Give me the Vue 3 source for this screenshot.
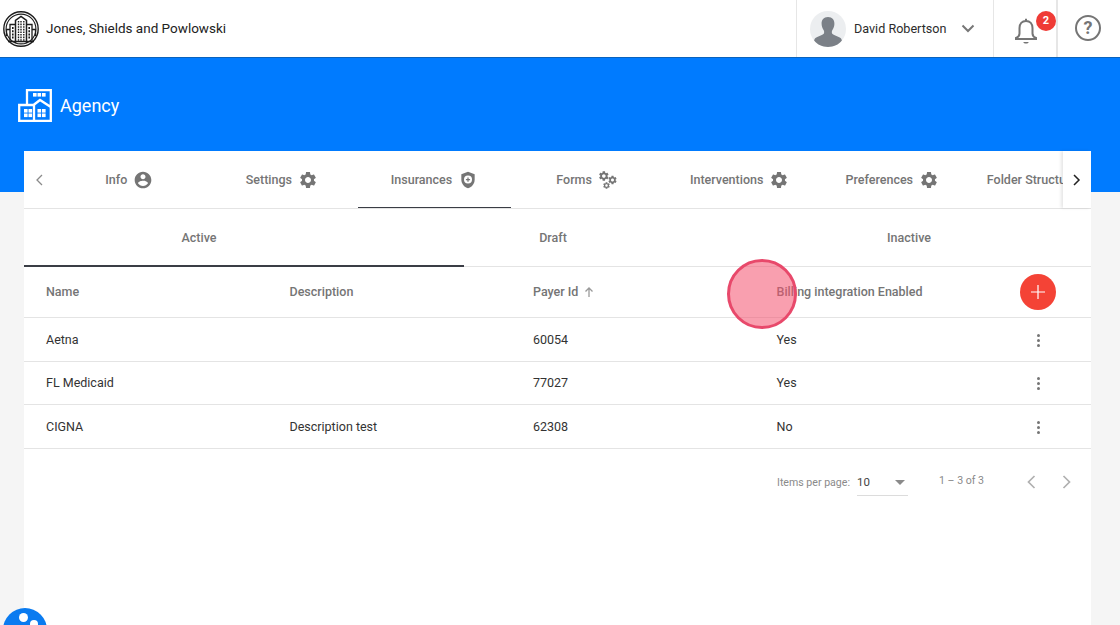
<script setup>
const gear = 'M19.14 12.94c.04-.3.06-.61.06-.94 0-.32-.02-.64-.07-.94l2.03-1.58c.18-.14.23-.41.12-.61l-1.92-3.32c-.12-.22-.37-.29-.59-.22l-2.39.96c-.5-.38-1.03-.7-1.62-.94l-.36-2.54c-.04-.24-.24-.41-.48-.41h-3.84c-.24 0-.43.17-.47.41l-.36 2.54c-.59.24-1.13.57-1.62.94l-2.39-.96c-.22-.08-.47 0-.59.22L2.74 8.87c-.12.21-.08.47.12.61l2.03 1.58c-.05.3-.09.63-.09.94s.02.64.07.94l-2.03 1.58c-.18.14-.23.41-.12.61l1.92 3.32c.12.22.37.29.59.22l2.39-.96c.5.38 1.03.7 1.62.94l.36 2.54c.05.24.24.41.48.41h3.84c.24 0 .44-.17.47-.41l.36-2.54c.59-.24 1.13-.56 1.62-.94l2.39.96c.22.08.47 0 .59-.22l1.92-3.32c.12-.22.07-.47-.12-.61l-2.01-1.58zM12 15.6c-1.98 0-3.6-1.62-3.6-3.6s1.62-3.6 3.6-3.6 3.6 1.62 3.6 3.6-1.62 3.6-3.6 3.6z'
const account = 'M12 2C6.48 2 2 6.48 2 12s4.48 10 10 10 10-4.48 10-10S17.52 2 12 2zm0 3c1.66 0 3 1.34 3 3s-1.34 3-3 3-3-1.34-3-3 1.34-3 3-3zm0 14.2c-2.5 0-4.71-1.28-6-3.22.03-1.99 4-3.08 6-3.08 1.99 0 5.97 1.09 6 3.08-1.29 1.94-3.5 3.22-6 3.22z'

const tabs = [
  { label: 'Info', icon: 'account' },
  { label: 'Settings', icon: 'gear' },
  { label: 'Insurances', icon: 'shield', active: true },
  { label: 'Forms', icon: 'gears' },
  { label: 'Interventions', icon: 'gear' },
  { label: 'Preferences', icon: 'gear' },
  { label: 'Folder Structure', icon: 'gear' },
]

const subTabs = ['Active', 'Draft', 'Inactive']

// small gears of the Forms tab icon
const formGears = [
  { x: 7, y: 7.2, s: 0.6 },
  { x: 17.4, y: 12, s: 0.52 },
  { x: 10.2, y: 18.6, s: 0.42 },
]

// window panes of the agency icon
const panes = [
  [15, 4], [19.5, 4], [24, 4],
  [6, 20], [10.5, 20], [6, 24.5], [10.5, 24.5],
  [19.5, 20], [24, 20], [19.5, 24.5], [24, 24.5],
]

const rows = [
  { name: 'Aetna', description: '', payer: '60054', billing: 'Yes' },
  { name: 'FL Medicaid', description: '', payer: '77027', billing: 'Yes' },
  { name: 'CIGNA', description: 'Description test', payer: '62308', billing: 'No' },
]
</script>

<template>
  <div class="page">
    <header class="topbar">
      <div class="brand">
        <svg class="logo" viewBox="0 0 36 36" fill="none" stroke="#1d1d1d" stroke-width="1.5">
          <circle cx="18" cy="18" r="17.2" stroke-width="1.4" />
          <circle cx="18" cy="18" r="14.9" stroke-width="1.1" />
          <path d="M12.500 32V9.500L18 5.500l5.500 4V32" />
          <path d="M7 30V13.500h5.500M23.500 13.500H29V30M3.500 25V18.500H7M29 18.500h3.500V25" stroke-width="1.300" />
          <path d="M15.500 10v20M18 10v20M20.800 10v20" stroke-width="1.400" stroke-dasharray="1.600 1" />
          <path d="M9.800 16v12M26.200 16v12" stroke-width="1.600" stroke-dasharray="2 1.200" />
          <path d="M5 30.500h26" />
        </svg>
        <span class="brand-name">Jones, Shields and Powlowski</span>
      </div>
      <div class="user">
        <svg class="avatar" viewBox="0 0 36 36">
          <circle cx="18" cy="18" r="18" fill="#eceef0" />
          <path d="M18 6c-4.400 0-6.600 3-6.400 7 .1 2.300.8 4.500 2.100 6.200.5.700.6 2.300.2 3.200-.8 1.500-5.200 2.600-7.600 4-1.300.7-2 1.900-2.200 3.200C7.400 33.900 12.500 36 18 36s10.600-2.100 13.900-6.400c-.2-1.300-.9-2.500-2.200-3.200-2.400-1.400-6.800-2.500-7.600-4-.4-.9-.3-2.500.2-3.200 1.300-1.700 2-3.900 2.100-6.200.2-4-2-7-6.400-7z" fill="#7b8087" />
        </svg>
        <span class="user-name">David Robertson</span>
        <svg class="chevron" viewBox="0 0 14 9" fill="none" stroke="#777" stroke-width="2"><path d="M1.500 1.500 7 7l5.500-5.500" /></svg>
      </div>
      <div class="bell-box">
        <svg class="bell" viewBox="0 0 24 26" fill="none" stroke="#757575" stroke-width="2">
          <path d="M12 3c-4 0-6.500 3-6.500 7v5.500c0 2-1.200 3.500-3.500 4.500v1h20v-1c-2.300-1-3.500-2.500-3.500-4.500V10c0-4-2.500-7-6.500-7z" />
          <path d="M12 .8V3" />
          <path d="M9.300 24h5.400c-.3 1-1.300 1.600-2.700 1.600S9.600 25 9.300 24z" fill="#757575" stroke="none" />
        </svg>
        <span class="badge">2</span>
      </div>
      <div class="help-box">
        <span class="help">?</span>
      </div>
    </header>

    <div class="band">
      <svg class="agency-icon" viewBox="0 0 34 33" fill="none" stroke="#fff" stroke-width="2.300">
        <path d="M9 16V1.200h23.800v30.600H1.200V16h14.300l6.500-5 10.800 7" />
        <path d="M16 15v17" />
        <g fill="#fff" stroke="none">
          <rect v-for="p in panes" :key="p.join()" :x="p[0]" :y="p[1]" width="3.600" height="3.600" />
        </g>
      </svg>
      <span class="band-title">Agency</span>
    </div>

    <main class="card">
      <nav class="tabs">
        <div class="tab-arrow">
          <svg width="8" height="12" viewBox="0 0 8 12" fill="none" stroke="#8a8a8a" stroke-width="1.300"><path d="M7 1 2 6l5 5" /></svg>
        </div>
        <div class="tab-track">
          <div v-for="tab in tabs" :key="tab.label" class="tab" :class="{ active: tab.active }">
            <span>{{ tab.label }}</span>
            <svg v-if="tab.icon === 'account'" class="tab-icon" viewBox="0 0 24 24" fill="#757575"><path :d="account" /></svg>
            <svg v-if="tab.icon === 'gear'" class="tab-icon" viewBox="0 0 24 24" fill="#757575"><path :d="gear" /></svg>
            <svg v-if="tab.icon === 'shield'" class="tab-icon" viewBox="0 0 24 24">
              <path d="M12 2 4 5v6.500c0 5 3.400 9.400 8 10.500 4.600-1.100 8-5.500 8-10.500V5z" fill="#757575" />
              <circle cx="12" cy="11.500" r="4.800" fill="#fff" />
              <path d="M12 9v5M9.500 11.500h5" stroke="#757575" stroke-width="1.500" />
            </svg>
            <svg v-if="tab.icon === 'gears'" class="tab-icon" viewBox="0 0 24 24" fill="#757575">
              <path v-for="g in formGears" :key="g.x" :d="gear" :transform="`translate(${g.x - 12 * g.s} ${g.y - 12 * g.s}) scale(${g.s})`" />
            </svg>
          </div>
        </div>
        <div class="tab-arrow right">
          <svg width="8" height="12" viewBox="0 0 8 12" fill="none" stroke="#222" stroke-width="1.500"><path d="m1 1 5 5-5 5" /></svg>
        </div>
      </nav>

      <div class="subtabs">
        <div v-for="name in subTabs" :key="name" class="subtab">{{ name }}</div>
        <div class="ink"></div>
      </div>

      <div class="row head">
        <div>Name</div>
        <div>Description</div>
        <div class="sorted">Payer Id
          <svg width="12" height="12" viewBox="0 0 12 12" fill="none" stroke="#9a9a9a" stroke-width="1.300"><path d="M6 11V2M2.500 5.500 6 2l3.500 3.500" /></svg>
        </div>
        <div>Billing integration Enabled</div>
        <div class="action"><span class="add"><svg width="14" height="14" viewBox="0 0 14 14" stroke="#fff" stroke-width="1.200"><path d="M7 0v14M0 7h14" /></svg></span></div>
      </div>
      <div v-for="r in rows" :key="r.name" class="row">
        <div>{{ r.name }}</div>
        <div>{{ r.description }}</div>
        <div>{{ r.payer }}</div>
        <div>{{ r.billing }}</div>
        <div class="action"><span class="dots"><i></i><i></i><i></i></span></div>
      </div>

      <div class="pager">
        <span class="per-page">Items per page:</span>
        <div class="select">
          <span>10</span>
          <i class="caret"></i>
        </div>
        <span class="range">1 – 3 of 3</span>
        <svg class="page-btn" width="10" height="14" viewBox="0 0 10 14" fill="none" stroke="#b0b0b0" stroke-width="1.700"><path d="M8.500 1 2.500 7l6 6" /></svg>
        <svg class="page-btn" width="10" height="14" viewBox="0 0 10 14" fill="none" stroke="#b0b0b0" stroke-width="1.700"><path d="m1.500 1 6 6-6 6" /></svg>
      </div>
    </main>

    <div class="cursor"></div>
    <div class="launcher"><i class="d1"></i><i class="d2"></i></div>
  </div>
</template>

<style>
html, body { margin: 0; overflow: hidden; }
</style>

<style scoped>
.page { position: relative; width: 1120px; height: 625px; overflow: hidden; background: #f5f5f5; font-family: Roboto, "Liberation Sans", sans-serif; color: #333; }

.topbar { display: flex; align-items: stretch; height: 57px; background: #fff; box-sizing: border-box; }
.brand { flex: 1; display: flex; align-items: center; padding-left: 3px; gap: 7px; }
.logo { width: 36px; height: 36px; }
.brand-name { font-size: 13.500px; color: #222; margin-top: -2px; }
.user { width: 198px; display: flex; align-items: center; box-sizing: border-box; padding-left: 14px; border-left: 1px solid #e6e6e6; border-right: 1px solid #e6e6e6; }
.avatar { width: 36px; height: 36px; margin-left: -1px; }
.user-name { margin-left: 8px; font-size: 12.600px; color: #2c2c2c; }
.chevron { width: 14px; height: 9px; margin-left: 15px; }
.bell-box { position: relative; width: 64px; box-sizing: border-box; border-right: 2px solid #e6e6e6; display: flex; align-items: center; padding-left: 20px; }
.bell { width: 24px; height: 26px; margin-top: 4px; }
.badge { position: absolute; left: 42px; top: 11px; width: 20px; height: 20px; border-radius: 50%; background: #ef3b36; color: #fff; font-size: 11px; font-weight: 700; text-align: center; line-height: 20px; }
.help-box { width: 62px; display: flex; align-items: center; justify-content: center; padding: 0 2px 1px 0; box-sizing: border-box; }
.help { width: 22px; height: 22px; border: 2.500px solid #757575; border-radius: 50%; color: #757575; font-size: 18px; font-weight: 700; text-align: center; line-height: 22px; }

.band { height: 135px; background: #007bff; border-top: 1px solid #0a63bd; box-sizing: border-box; display: flex; align-items: flex-start; padding: 31px 0 0 18px; gap: 8px; }
.agency-icon { width: 34px; height: 33px; }
.band-title { font-size: 18px; color: #fff; line-height: 35px; margin-top: -1px; }

.card { position: absolute; left: 24px; top: 151px; width: 1067px; height: 474px; background: #fff; }

.tabs { display: flex; height: 58px; border-bottom: 1px solid #e4e4e4; box-sizing: border-box; }
.tab-arrow { flex: 0 0 29px; display: flex; align-items: center; justify-content: center; }
.tab-arrow.right { flex-basis: 28px; box-shadow: -2px 0 3px rgba(0, 0, 0, 0.1); background: #fff; z-index: 1; }
.tab-track { flex: 1; display: flex; overflow: hidden; }
.tab { flex: 0 0 152.600px; position: relative; display: flex; align-items: center; justify-content: center; gap: 6px; font-size: 12.500px; font-weight: 500; color: #757575; white-space: nowrap; }
.tab.active::after { content: ''; position: absolute; left: 0; right: 0; bottom: -1px; height: 2px; background: #3a3d45; }
.tab-icon { width: 20px; height: 20px; }

.subtabs { position: relative; display: flex; height: 58px; border-bottom: 1px solid #e4e4e4; box-sizing: border-box; }
.subtab { flex: 1; display: flex; align-items: center; justify-content: center; font-size: 12.500px; font-weight: 500; color: #757575; padding-bottom: 1px; box-sizing: border-box; }
.subtab:nth-child(1) { padding-right: 4px; }
.subtab:nth-child(2) { padding-right: 6px; }
.subtab:nth-child(3) { padding-right: 7px; }
.ink { position: absolute; left: 0; bottom: -1px; width: 440px; height: 2px; background: #3a3d45; }

.row { display: grid; grid-template-columns: 243.500px 243.500px 243.500px 209px 1fr; align-items: center; height: 43.500px; padding-left: 22px; border-bottom: 1px solid #e4e4e4; box-sizing: border-box; font-size: 12.500px; color: #333; }
.row.head { height: 51px; font-size: 12.500px; font-weight: 500; color: #757575; padding-bottom: 1px; }
.sorted { display: flex; align-items: center; gap: 5px; }
.action { display: flex; justify-content: center; }
.add { width: 36px; height: 36px; border-radius: 50%; background: #f44336; display: flex; align-items: center; justify-content: center; }
.dots { display: flex; flex-direction: column; gap: 2px; margin-top: 2px; }
.dots i { width: 3px; height: 3px; border-radius: 50%; background: #757575; }

.pager { display: flex; align-items: center; height: 66px; padding-left: 753px; font-size: 10.600px; color: #8a8a8a; }
.per-page { margin-top: 1px; }
.select { width: 51px; margin-left: 7px; height: 27px; box-sizing: border-box; display: flex; align-items: center; justify-content: space-between; padding-right: 3px; border-bottom: 1px solid #dcdcdc; color: #444; font-size: 11.500px; margin-top: 2px; }
.caret { width: 0; height: 0; border-left: 5px solid transparent; border-right: 5px solid transparent; border-top: 5px solid #8a8a8a; }
.range { margin-left: 31px; margin-top: -3px; }
.page-btn { margin-left: 26px; }
.range + .page-btn { margin-left: 42px; }

.cursor { position: absolute; left: 727px; top: 259px; width: 70px; height: 70px; box-sizing: border-box; border-radius: 50%; border: 3px solid #e8496b; background: rgba(244, 80, 110, 0.55); }
.launcher { position: absolute; left: 3px; top: 608px; width: 44px; height: 44px; border-radius: 50%; background: #0a7bf0; }
.launcher i { position: absolute; border-radius: 50%; background: #fff; }
.d1 { left: 16px; top: 5px; width: 9px; height: 9px; }
.d2 { left: 27px; top: 12px; width: 8px; height: 8px; }
</style>
